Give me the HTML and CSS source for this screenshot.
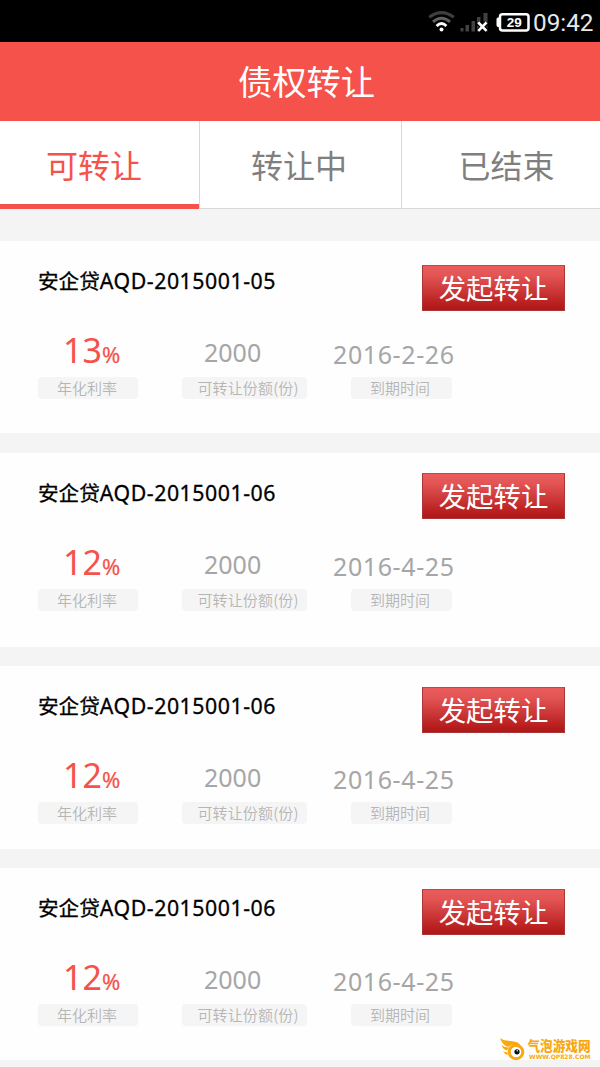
FILE: index.html
```html
<!DOCTYPE html>
<html lang="zh-CN">
<head>
<meta charset="utf-8">
<title>债权转让</title>
<link rel="stylesheet" href="styles.css">
</head>
<body>
<div class="statusbar">
  <svg class="status-icons" width="112" height="42" viewBox="0 0 112 42">
    <g fill="none" stroke-width="2.6">
      <path d="M1.2 17.3Q13.500 8 25.800 17.3" stroke="#3e3e3e" stroke-width="3"/>
      <path d="M5 21.800Q13.500 14.600 22 21.800" stroke="#606060" stroke-width="3"/>
      <path d="M8.600 26Q13.500 21.200 18.400 26" stroke="#fff" stroke-width="2.800"/>
    </g>
    <circle cx="13.500" cy="29.600" r="2" fill="#fff"/>
    <g fill="#424242">
      <rect x="32.500" y="28" width="3" height="3.500"/>
      <rect x="37.500" y="25" width="3.500" height="6.500"/>
      <rect x="43.500" y="21" width="3.500" height="10.500"/>
      <rect x="49" y="17" width="3.500" height="14.500"/>
      <rect x="55.500" y="13" width="4" height="18.500"/>
    </g>
    <path d="M50.500 23l8 8M58.500 23l-8 8" stroke="#000" stroke-width="5"/>
    <path d="M50.300 22.500l8.200 8.300M58.500 22.500l-8.200 8.300" stroke="#fff" stroke-width="2.600"/>
    <rect x="72" y="14.200" width="28.500" height="16.400" rx="2.500" fill="#000" stroke="#fff" stroke-width="2.500"/>
    <path d="M71.500 17.500h-1.500q-1.500 0-1.500 2v5.500q0 2 1.500 2h1.500z" fill="#fff"/>
    <text class="battery-text" x="86.300" y="27.300">29</text>
  </svg>
  <span class="clock">09:42</span>
</div>
<header class="header">债权转让</header>
<nav class="tabs">
  <div class="tab tab-active">可转让</div>
  <div class="tab tab-middle">转让中</div>
  <div class="tab tab-last">已结束</div>
</nav>
<main class="list">
  <section class="card card-first">
    <div class="card-head"><h2 class="title">安企贷<span class="code">AQD-2015001-05</span></h2><button class="transfer">发起转让</button></div>
    <div class="metrics">
      <div class="metric rate"><p class="value">13<small>%</small></p><span class="label">年化利率</span></div>
      <div class="metric shares"><p class="value">2000</p><span class="label">可转让份额(份)</span></div>
      <div class="metric due"><p class="value">2016-2-26</p><span class="label">到期时间</span></div>
    </div>
  </section>
  <section class="card card-second">
    <div class="card-head"><h2 class="title">安企贷<span class="code">AQD-2015001-06</span></h2><button class="transfer">发起转让</button></div>
    <div class="metrics">
      <div class="metric rate"><p class="value">12<small>%</small></p><span class="label">年化利率</span></div>
      <div class="metric shares"><p class="value">2000</p><span class="label">可转让份额(份)</span></div>
      <div class="metric due"><p class="value">2016-4-25</p><span class="label">到期时间</span></div>
    </div>
  </section>
  <section class="card card-third">
    <div class="card-head"><h2 class="title">安企贷<span class="code">AQD-2015001-06</span></h2><button class="transfer">发起转让</button></div>
    <div class="metrics">
      <div class="metric rate"><p class="value">12<small>%</small></p><span class="label">年化利率</span></div>
      <div class="metric shares"><p class="value">2000</p><span class="label">可转让份额(份)</span></div>
      <div class="metric due"><p class="value">2016-4-25</p><span class="label">到期时间</span></div>
    </div>
  </section>
  <section class="card">
    <div class="card-head"><h2 class="title">安企贷<span class="code">AQD-2015001-06</span></h2><button class="transfer">发起转让</button></div>
    <div class="metrics">
      <div class="metric rate"><p class="value">12<small>%</small></p><span class="label">年化利率</span></div>
      <div class="metric shares"><p class="value">2000</p><span class="label">可转让份额(份)</span></div>
      <div class="metric due"><p class="value">2016-4-25</p><span class="label">到期时间</span></div>
    </div>
  </section>
</main>
<svg class="watermark" width="100" height="40" viewBox="0 -10 100 40">
  <g fill="#f9a90f">
    <path d="M0 1C3 4 9 3.500 14 4.500Q19 5.300 20 8Q13 6.500 8 10Q2 7.500 0 1z"/>
    <path d="M1.500 8Q5 11 9 10.300L7 13.600Q3 12.500 1.500 8z"/>
    <path d="M3 14Q5 15.500 7.500 15.200L7.500 18Q4.500 17 3 14z"/>
  </g>
  <circle cx="16" cy="15" r="6.800" fill="#fff" stroke="#f9a90f" stroke-width="3"/>
  <circle cx="17" cy="14.800" r="2.600" fill="#111"/>
  <circle cx="17.300" cy="13.800" r=".7" fill="#fff"/>
  <text class="wm-name" x="27.500" y="13.800" textLength="63" lengthAdjust="spacingAndGlyphs">气泡游戏网</text>
  <text class="wm-url" x="29" y="22" textLength="61.500" lengthAdjust="spacingAndGlyphs">WWW.QP828.COM</text>
</svg>
</body>
</html>
```

FILE: styles.css
```css
* { box-sizing: border-box; }
body {
  margin: 0;
  width: 600px;
  height: 1067px;
  overflow: hidden;
  position: relative;
  background: #f4f4f4;
  font-family: "Noto Sans", "Noto Sans CJK SC", sans-serif;
}
.statusbar {
  height: 42px;
  background: #000;
  display: flex;
  justify-content: flex-end;
  padding-right: 6px;
}
.status-icons { flex: none; margin-right: -7px; }
.battery-text { font: bold 13.5px "Liberation Sans", sans-serif; fill: #fff; text-anchor: middle; }
.clock {
  width: 61px;
  font: 24.3px/45px Roboto, sans-serif;
  color: #e8e8e8;
  white-space: nowrap;
}
.header {
  height: 79px;
  background: #f5524b;
  color: #fff;
  text-align: center;
  padding-left: 13px;
  font: 34.3px/76px "Noto Sans CJK SC", sans-serif;
}
.tabs {
  height: 88px;
  display: grid;
  grid-template-columns: 199px 203px 198px;
  grid-template-rows: 88px;
  background: #fff;
}
.tab {
  font: 32px/86px "Noto Sans CJK SC", sans-serif;
  color: #7f7f7f;
  text-align: center;
  border-bottom: 1px solid #d8d8d8;
}
.tab-active { color: #f5524b; border-bottom: 5px solid #f5524b; padding-right: 11px; }
.tab-middle { border-left: 1px solid #d8d8d8; border-right: 1px solid #d8d8d8; padding-right: 3px; }
.tab-last { padding-left: 11px; }
.list {
  padding-top: 32px;
  display: flex;
  flex-direction: column;
  gap: 19px;
}
.card {
  flex: none;
  height: 192px;
  background: #fefefe;
  padding: 21px 35px 0 38px;
}
.card-first { margin-bottom: 1px; padding-top: 24px; }
.card-first .title { margin-top: -3px; }
.card-first .metrics { margin-top: 17px; }
.card-second { height: 194px; padding-top: 20px; }
.card-second .title { margin-top: 1px; }
.card-third { height: 183px; }
.card-head { height: 46px; display: flex; justify-content: space-between; }
.title {
  margin: 0;
  font-size: 20.6px;
  line-height: 36px;
  font-weight: 400;
  font-family: "Noto Sans CJK SC", sans-serif;
  color: #000;
  -webkit-text-stroke: .3px #000;
  white-space: nowrap;
}
.code { font-family: "Noto Sans", sans-serif; font-size: 21.3px; letter-spacing: .54px; line-height: 1; }
.transfer {
  width: 143px;
  height: 46px;
  padding: 0 0 2px;
  border: 1px solid #a93636;
  border-top-color: #b94b4b;
  background: linear-gradient(#ea5c5c, #e45656 20%, #b51a1a 92%, #ad1919);
  color: #fff;
  font: 27.4px/42px "Noto Sans CJK SC", sans-serif;
}
.metrics { display: flex; margin-top: 20px; }
.card-second .metrics { margin-top: 21px; }
.metric { height: 72px; }
.rate { width: 100px; margin-right: 44px; }
.shares { width: 125px; margin-right: 27px; }
.due { width: 125px; padding-left: 17px; }
.value {
  margin: 0;
  height: 49px;
  font-size: 25px;
  line-height: 50px;
  color: #a6a6a6;
  white-space: nowrap;
}
.rate .value { color: #f5524b; font-size: 34px; line-height: 44px; padding-left: 25px; }
.rate small { font-size: 22px; -webkit-text-stroke: .2px #f5524b; }
.shares .value { padding-left: 22px; line-height: 48px; }
.due .value { margin-left: -18px; padding-top: 1px; letter-spacing: .6px; }
.label {
  display: block;
  height: 22px;
  border-radius: 4px;
  background: #f5f5f5;
  color: #b5b5b5;
  font: 350 15px/22px "Noto Sans CJK SC", sans-serif;
  text-align: center;
  white-space: nowrap;
}
.rate .label { padding-right: 2px; }
.shares .label { padding-left: 7px; letter-spacing: .15px; }
.due .label { width: 101px; padding-right: 3px; }
.watermark { position: absolute; left: 500px; top: 1027px; }
.wm-name { font: 900 13.5px/1 "Noto Sans CJK SC", sans-serif; fill: #f9a90f; }
.wm-url { font: bold 6px/1 "DejaVu Sans", sans-serif; fill: #f9a90f; }
```
